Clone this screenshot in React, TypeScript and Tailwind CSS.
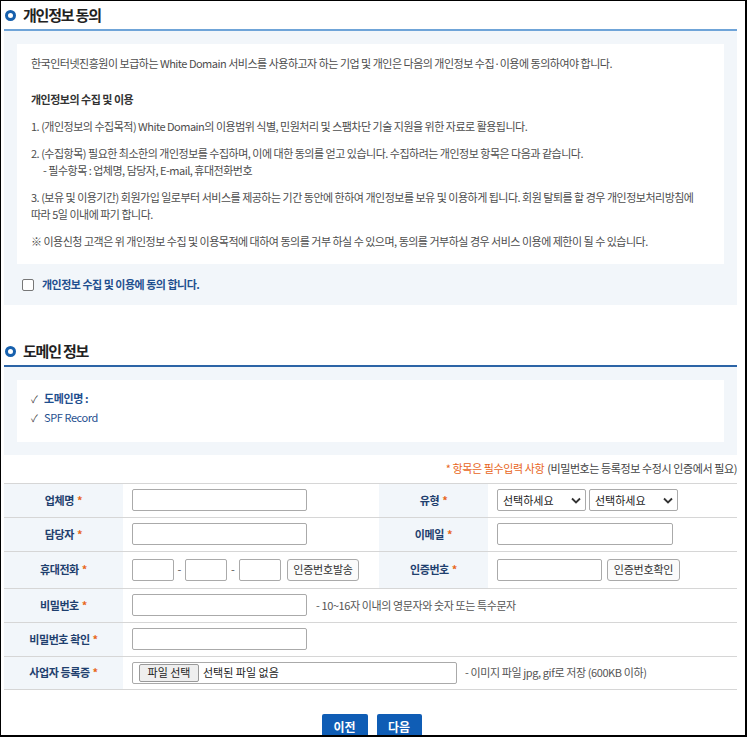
import React from "react";

const F = { fontFamily: '"Noto Sans CJK KR", "Noto Sans", sans-serif' };

function Heading({ title, line }: { title: string; line: string }) {
  return (
    <div>
      <div className="flex h-[28px] items-center">
        <span className="ml-[1px] inline-block h-[11px] w-[11px] rounded-full border-[3px] border-[#1760ad]" />
        <span className="ml-[7px] text-[15px] font-bold tracking-[-1.2px] text-[#222]">{title}</span>
      </div>
      <div className={line} />
    </div>
  );
}

function Star() {
  return <span className="ml-[3px] text-[#e8661c]">*</span>;
}

function Label({ children, w }: { children: React.ReactNode; w: string }) {
  return (
    <div className={`${w} flex shrink-0 items-center justify-center bg-[#f2f6fa] text-[11px] font-bold tracking-[-0.4px] text-[#1f3f6e]`}>
      {children}
      <Star />
    </div>
  );
}

function Input({ w }: { w: string }) {
  return <div className={`${w} h-[22px] rounded-[2px] border border-[#aaaaaa] bg-white`} />;
}

function Btn({ children, w }: { children: React.ReactNode; w: string }) {
  return (
    <div className={`${w} flex h-[22px] items-center justify-center rounded-[3px] border border-[#aaaaaa] bg-[#fbfbfb] text-[11px] tracking-[-0.2px] text-[#333]`}>
      {children}
    </div>
  );
}

function Select({ w }: { w: string }) {
  return (
    <div className={`${w} flex h-[22px] items-center justify-between rounded-[2px] border border-[#aaaaaa] bg-white pl-[5px] pr-[4px] text-[11px] text-[#222]`}>
      <span>선택하세요</span>
      <svg width="10" height="7" viewBox="0 0 10 7">
        <path d="M1 1.5 L5 5.5 L9 1.5" fill="none" stroke="#333" strokeWidth="1.8" />
      </svg>
    </div>
  );
}

export default function App() {
  const p = "leading-[17px]";
  return (
    <div style={F} className="h-[737px] w-[747px] overflow-hidden border-l border-t border-r-2 border-b-2 border-black bg-white">
      <div className="w-[736px] pl-[3px]">
        <Heading title="개인정보 동의" line="h-[2px] bg-[#6fa4d8]" />
        <div className="bg-[#f2f6fa] px-[13px] pt-[13px]">
          <div className="bg-white px-[14px] pb-[14px] pt-[11px] text-[11px] tracking-[-0.5px] text-[#4d4d4d]">
            <p className={p}>한국인터넷진흥원이 보급하는 White Domain 서비스를 사용하고자 하는 기업 및 개인은 다음의 개인정보 수집·이용에 동의하여야 합니다.</p>
            <p className={`${p} mt-[19px] font-bold text-[#333]`}>개인정보의 수집 및 이용</p>
            <p className={`${p} mt-[10px]`}>1. (개인정보의 수집목적) White Domain의 이용범위 식별, 민원처리 및 스팸차단 기술 지원을 위한 자료로 활용됩니다.</p>
            <p className={`${p} mt-[10px]`}>2. (수집항목) 필요한 최소한의 개인정보를 수집하며, 이에 대한 동의를 얻고 있습니다. 수집하려는 개인정보 항목은 다음과 같습니다.</p>
            <p className={`${p} pl-[12px]`}>- 필수항목 : 업체명, 담당자, E-mail, 휴대전화번호</p>
            <p className={`${p} mt-[10px]`}>3. (보유 및 이용기간) 회원가입 일로부터 서비스를 제공하는 기간 동안에 한하여 개인정보를 보유 및 이용하게 됩니다. 회원 탈퇴를 할 경우 개인정보처리방침에</p>
            <p className={p}>따라 5일 이내에 파기 합니다.</p>
            <p className={`${p} mt-[10px]`}>※ 이용신청 고객은 위 개인정보 수집 및 이용목적에 대하여 동의를 거부 하실 수 있으며, 동의를 거부하실 경우 서비스 이용에 제한이 될 수 있습니다.</p>
          </div>
          <div className="flex h-[41px] items-center pl-[5px]">
            <span className="inline-block h-[12px] w-[12px] rounded-[2px] border border-[#777] bg-white" />
            <span className="ml-[8px] text-[11px] font-bold tracking-[-0.5px] text-[#1f4f8f]">개인정보 수집 및 이용에 동의 합니다.</span>
          </div>
        </div>

        <div className="mt-[32px]">
          <Heading title="도메인 정보" line="h-[1.5px] bg-[#2c64a6]" />
        </div>
        <div className="bg-[#f2f6fa] p-[13px]">
          <div className="h-[62px] bg-white pl-[14px] pt-[9px] text-[11px] tracking-[-0.4px]">
            <div className="flex h-[19px] items-center">
              <span className="w-[13px] text-[10px] text-[#444]">✓</span>
              <span className="font-bold text-[#1f4f8f]">도메인명 :</span>
            </div>
            <div className="flex h-[19px] items-center">
              <span className="w-[13px] text-[10px] text-[#444]">✓</span>
              <span className="text-[#1f4f8f]">SPF Record</span>
            </div>
          </div>
        </div>

        <div className="flex h-[28px] items-center justify-end text-[11px] tracking-[-0.4px]">
          <span className="text-[#e8661c]">* 항목은 필수입력 사항</span>
          <span className="ml-[3px] text-[#444]">(비밀번호는 등록정보 수정시 인증에서 필요)</span>
        </div>

        <div className="border-t border-[#d6d6d6] text-[11px]">
          <div className="flex h-[34px] border-b border-[#d6d6d6]">
            <Label w="w-[119px]">업체명</Label>
            <div className="flex w-[256px] items-center pl-[9px]"><Input w="w-[175px]" /></div>
            <Label w="w-[109px]">유형</Label>
            <div className="flex flex-1 items-center gap-[3px] pl-[9px]">
              <Select w="w-[89px]" />
              <Select w="w-[89px]" />
            </div>
          </div>
          <div className="flex h-[34px] border-b border-[#d6d6d6]">
            <Label w="w-[119px]">담당자</Label>
            <div className="flex w-[256px] items-center pl-[9px]"><Input w="w-[175px]" /></div>
            <Label w="w-[109px]">이메일</Label>
            <div className="flex flex-1 items-center pl-[9px]"><Input w="w-[176px]" /></div>
          </div>
          <div className="flex h-[37px] border-b border-[#d6d6d6]">
            <Label w="w-[119px]">휴대전화</Label>
            <div className="flex w-[256px] items-center pl-[9px]">
              <Input w="w-[42px]" />
              <span className="w-[11px] text-center text-[#555]">-</span>
              <Input w="w-[42px]" />
              <span className="w-[12px] text-center text-[#555]">-</span>
              <Input w="w-[42px]" />
              <div className="ml-[6px]"><Btn w="w-[72px]">인증번호발송</Btn></div>
            </div>
            <Label w="w-[109px]">인증번호</Label>
            <div className="flex flex-1 items-center pl-[9px]">
              <Input w="w-[105px]" />
              <div className="ml-[5px]"><Btn w="w-[73px]">인증번호확인</Btn></div>
            </div>
          </div>
          <div className="flex h-[34px] border-b border-[#d6d6d6]">
            <Label w="w-[119px]">비밀번호</Label>
            <div className="flex flex-1 items-center pl-[9px]">
              <Input w="w-[175px]" />
              <span className="ml-[9px] tracking-[-0.4px] text-[#555]">- 10~16자 이내의 영문자와 숫자 또는 특수문자</span>
            </div>
          </div>
          <div className="flex h-[34px] border-b border-[#d6d6d6]">
            <Label w="w-[119px]">비밀번호 확인</Label>
            <div className="flex flex-1 items-center pl-[9px]"><Input w="w-[175px]" /></div>
          </div>
          <div className="flex h-[33px] border-b border-[#d6d6d6]">
            <Label w="w-[119px]">사업자 등록증</Label>
            <div className="flex flex-1 items-center pl-[9px]">
              <div className="flex h-[22px] w-[325px] items-center rounded-[2px] border border-[#aaaaaa] bg-white pl-[6px]">
                <span className="flex h-[18px] w-[60px] items-center justify-center rounded-[2px] border border-[#999] bg-[#efefef] text-[11px] text-[#222]">파일 선택</span>
                <span className="ml-[4px] text-[11px] text-[#222]">선택된 파일 없음</span>
              </div>
              <span className="ml-[8px] tracking-[-0.4px] text-[#555]">- 이미지 파일 jpg, gif로 저장 (600KB 이하)</span>
            </div>
          </div>
        </div>

        <div className="mt-[24px] flex justify-center gap-[9px] pl-[2px]">
          <div className="flex h-[26px] w-[46px] items-center justify-center rounded-t-[2px] bg-[#0f5db5] text-[12px] font-bold text-white">이전</div>
          <div className="flex h-[26px] w-[45px] items-center justify-center rounded-t-[2px] bg-[#0f5db5] text-[12px] font-bold text-white">다음</div>
        </div>
      </div>
    </div>
  );
}
